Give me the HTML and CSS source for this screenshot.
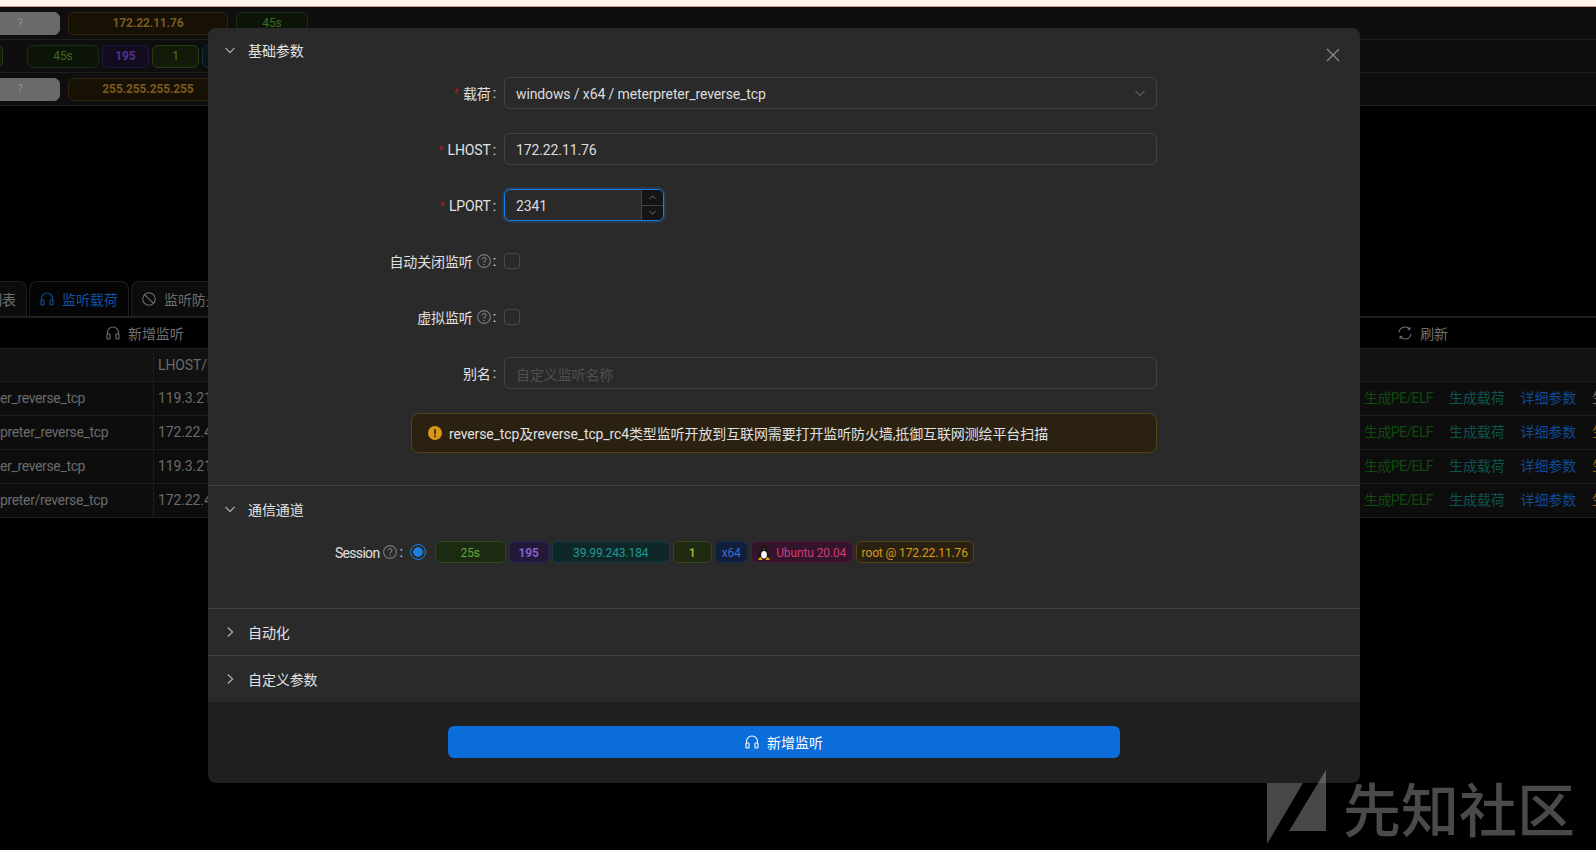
FILE: index.html
```html
<!DOCTYPE html>
<html lang="en">
<head>
    <meta charset="UTF-8">
    <meta name="viewport" content="width=device-width, initial-scale=1.0">
    <title>新增监听</title>
    <link rel="stylesheet" href="styles.css">
</head>
<body>
    <svg class="icon-defs" width="0" height="0">
        <symbol id="i-headset" viewBox="0 0 14 14">
            <path d="M1.500 8V6.500a5.500 5.500 0 0 1 11 0V8" fill="none" stroke="currentColor" stroke-width="1.1"/>
            <rect x="1" y="8" width="3" height="5" rx=".6" fill="none" stroke="currentColor" stroke-width="1.1"/>
            <rect x="10" y="8" width="3" height="5" rx=".6" fill="none" stroke="currentColor" stroke-width="1.1"/>
        </symbol>
        <symbol id="i-help" viewBox="0 0 14 14">
            <circle cx="7" cy="7" r="6.4" fill="none" stroke="currentColor" stroke-width="1.1"/>
            <path d="M5.100 5.500a1.900 1.900 0 1 1 2.900 1.600c-.7.4-1 .8-1 1.600" fill="none" stroke="currentColor" stroke-width="1.1"/>
            <circle cx="7" cy="10.400" r=".75" fill="currentColor"/>
        </symbol>
        <symbol id="i-down" viewBox="0 0 12 12">
            <path d="M1.500 3.800 6 8.600l4.500-4.800" fill="none" stroke="currentColor" stroke-width="1.2"/>
        </symbol>
        <symbol id="i-right" viewBox="0 0 12 12">
            <path d="M3.800 1.500 8.600 6l-4.800 4.500" fill="none" stroke="currentColor" stroke-width="1.2"/>
        </symbol>
    </svg>

    <div class="page">
        <div class="top-strip"></div>

        <div class="session-row">
            <span class="tag tag-grey">?</span>
            <span class="tag tag-gold tag-host">172.22.11.76</span>
            <span class="tag tag-green tag-time">45s</span>
        </div>
        <div class="session-row session-row-shift">
            <span class="tag tag-lime tag-stub"></span>
            <span class="tag tag-green tag-time">45s</span>
            <span class="tag tag-purple tag-pid">195</span>
            <span class="tag tag-lime tag-pid">1</span>
            <span class="tag tag-teal tag-pid"></span>
        </div>
        <div class="session-row">
            <span class="tag tag-grey">?</span>
            <span class="tag tag-gold tag-host">255.255.255.255</span>
        </div>

        <div class="spacer"></div>

        <div class="tabs">
            <div class="tab tab-cut">列表</div>
            <div class="tab tab-active"><svg class="ico"><use href="#i-headset"/></svg>监听载荷</div>
            <div class="tab">
                <svg class="ico" viewBox="0 0 14 14"><circle cx="7" cy="7" r="6.3" fill="none" stroke="currentColor" stroke-width="1.1"/><path d="M2.600 2.600l8.800 8.800" stroke="currentColor" stroke-width="1.1"/></svg>监听防火墙
            </div>
        </div>

        <div class="toolbar">
            <div class="tool"><svg class="ico"><use href="#i-headset"/></svg>新增监听</div>
            <div class="tool">
                <svg class="ico" viewBox="0 0 14 14"><path d="M1 6.200A6 6 0 0 1 11.600 3.200M13 7.800A6 6 0 0 1 2.400 10.800" fill="none" stroke="currentColor" stroke-width="1.1"/><path d="M12 1v2.600H9.600M2 13v-2.600h2.400" fill="none" stroke="currentColor" stroke-width="1"/></svg>刷新
            </div>
        </div>

        <div class="listen-table">
            <div class="listen-head">
                <div class="cell-payload"></div>
                <div class="cell-host">LHOST/RHOST</div>
            </div>
            <div class="listen-row">
                <div class="cell-payload">er_reverse_tcp</div>
                <div class="cell-host">119.3.21.5</div>
                <div class="actions">
                    <span class="act-pe">生成PE/ELF</span><span class="act-teal">生成载荷</span><span class="act-blue">详细参数</span><span class="act-grey">生</span>
                </div>
            </div>
            <div class="listen-row">
                <div class="cell-payload">preter_reverse_tcp</div>
                <div class="cell-host">172.22.4.8</div>
                <div class="actions">
                    <span class="act-pe">生成PE/ELF</span><span class="act-teal">生成载荷</span><span class="act-blue">详细参数</span><span class="act-gold">生</span>
                </div>
            </div>
            <div class="listen-row">
                <div class="cell-payload">er_reverse_tcp</div>
                <div class="cell-host">119.3.21.5</div>
                <div class="actions">
                    <span class="act-pe">生成PE/ELF</span><span class="act-teal">生成载荷</span><span class="act-blue">详细参数</span><span class="act-gold">生</span>
                </div>
            </div>
            <div class="listen-row">
                <div class="cell-payload">preter/reverse_tcp</div>
                <div class="cell-host">172.22.4.8</div>
                <div class="actions">
                    <span class="act-pe">生成PE/ELF</span><span class="act-teal">生成载荷</span><span class="act-blue">详细参数</span><span class="act-gold">生</span>
                </div>
            </div>
        </div>
    </div>

    <div class="modal">
        <svg class="modal-close" viewBox="0 0 14 14"><path d="M1 1l12 12M13 1 1 13" stroke="currentColor" stroke-width="1.3" fill="none"/></svg>

        <section class="panel panel-first">
            <div class="panel-head"><svg class="chev"><use href="#i-down"/></svg>基础参数</div>
            <div class="panel-body">
                <div class="form-item">
                    <label class="form-label"><i class="req">*</i>载荷<b class="colon">:</b></label>
                    <div class="input input-select">windows / x64 / meterpreter_reverse_tcp<svg class="select-arrow"><use href="#i-down"/></svg></div>
                </div>
                <div class="form-item">
                    <label class="form-label label-latin"><i class="req">*</i>LHOST<b class="colon">:</b></label>
                    <div class="input">172.22.11.76</div>
                </div>
                <div class="form-item">
                    <label class="form-label label-latin"><i class="req">*</i>LPORT<b class="colon">:</b></label>
                    <div class="input input-number">2341
                        <div class="steppers">
                            <span class="step"><svg viewBox="0 0 12 12"><path d="M2.500 7.800 6 4.200l3.500 3.600" fill="none" stroke="currentColor"/></svg></span>
                            <span class="step"><svg viewBox="0 0 12 12"><path d="M2.500 4.200 6 7.800l3.500-3.600" fill="none" stroke="currentColor"/></svg></span>
                        </div>
                    </div>
                </div>
                <div class="form-item">
                    <label class="form-label">自动关闭监听<svg class="help"><use href="#i-help"/></svg><b class="colon">:</b></label>
                    <span class="checkbox"></span>
                </div>
                <div class="form-item">
                    <label class="form-label">虚拟监听<svg class="help"><use href="#i-help"/></svg><b class="colon">:</b></label>
                    <span class="checkbox"></span>
                </div>
                <div class="form-item">
                    <label class="form-label">别名<b class="colon">:</b></label>
                    <div class="input input-empty">自定义监听名称</div>
                </div>
                <div class="alert">
                    <svg class="alert-icon" viewBox="0 0 14 14"><circle cx="7" cy="7" r="7" fill="#d89614"/><rect x="6.200" y="3" width="1.600" height="5.400" rx=".6" fill="#2b2111"/><circle cx="7" cy="10.300" r=".95" fill="#2b2111"/></svg>
                    reverse_tcp及reverse_tcp_rc4类型监听开放到互联网需要打开监听防火墙,抵御互联网测绘平台扫描
                </div>
            </div>
        </section>

        <section class="panel">
            <div class="panel-head"><svg class="chev"><use href="#i-down"/></svg>通信通道</div>
            <div class="panel-body panel-body-session">
                <label class="session-label"><span class="session-name">Session</span><svg class="help"><use href="#i-help"/></svg><b class="colon">:</b></label>
                <span class="radio"></span>
                <div class="session-tags">
                    <span class="stag stag-green">25s</span>
                    <span class="stag stag-purple">195</span>
                    <span class="stag stag-cyan">39.99.243.184</span>
                    <span class="stag stag-lime">1</span>
                    <span class="stag stag-blue">x64</span>
                    <span class="stag stag-pink">
                        <svg class="penguin" viewBox="0 0 14 16"><path d="M7 .5c2 0 2.800 1.600 2.800 3.400 0 2 2.400 4 2.400 6.600 0 1.500-1 2.500-2 2.900H4c-1-.4-2.200-1.400-2.200-2.900 0-2.600 2.400-4.600 2.400-6.600C4.200 2.100 5 .5 7 .5z" fill="#151515"/><ellipse cx="7" cy="9.800" rx="2.900" ry="3.800" fill="#f4f4f4"/><path d="M6 3.400h2L7 4.800z" fill="#e6a817"/><path d="M1 14l3-2 1.500 3H2zM13 14l-3-2-1.500 3H12z" fill="#e6a817"/></svg>
                        Ubuntu 20.04
                    </span>
                    <span class="stag stag-gold">root @ 172.22.11.76</span>
                </div>
            </div>
        </section>

        <section class="panel">
            <div class="panel-head"><svg class="chev"><use href="#i-right"/></svg>自动化</div>
        </section>
        <section class="panel">
            <div class="panel-head"><svg class="chev"><use href="#i-right"/></svg>自定义参数</div>
        </section>

        <div class="modal-footer">
            <button class="btn-primary" type="button"><svg class="ico"><use href="#i-headset"/></svg>新增监听</button>
        </div>
    </div>

    <div class="watermark">
        <svg class="watermark-logo" viewBox="0 0 59 74"><path d="M0 13h36L0 74z" /><path d="M59 0v61H22z"/></svg>
        <span class="watermark-text">先知社区</span>
    </div>
</body>
</html>
```

FILE: styles.css
```css
* {
    box-sizing: border-box;
}
html, body {
    margin: 0;
    width: 1596px;
    height: 850px;
    overflow: hidden;
}
body {
    position: relative;
    background-color: #000;
    font-family: Roboto, "Noto Sans CJK SC", sans-serif;
    font-size: 14px;
    letter-spacing: -0.12px;
    color: #ddd;
}
.icon-defs {
    position: absolute;
}
.ico {
    width: 14px;
    height: 14px;
    flex: none;
}

/* page behind the dialog */
.page {
    display: flex;
    flex-direction: column;
    height: 850px;
    overflow: hidden;
}
.top-strip {
    height: 7px;
    background-color: #fff3e8;
    border-bottom: 1px solid #c89a86;
}
.session-row {
    display: flex;
    align-items: center;
    gap: 8px;
    height: 33px;
    background-color: #0e0e0e;
    border-bottom: 1px solid #1f1f1f;
}
.session-row-shift {
    gap: 3px;
}
.tag {
    display: flex;
    align-items: center;
    justify-content: center;
    height: 23px;
    border: 1px solid;
    border-radius: 6px;
    font-size: 12px;
    font-weight: 700;
    flex: none;
}
.tag-grey {
    width: 80px;
    margin-left: -20px;
    background-color: #6a6a6a;
    border-color: #6a6a6a;
    color: #8a8a8a;
    font-weight: 400;
}
.tag-gold {
    background-color: #171005;
    border-color: #33250c;
    color: #7a5a1e;
}
.tag-host {
    width: 160px;
}
.tag-green {
    background-color: #0c1408;
    border-color: #1a2c12;
    color: #3c6a26;
    font-weight: 400;
}
.tag-time {
    width: 72px;
}
.tag-purple {
    background-color: #120c1e;
    border-color: #221640;
    color: #50308f;
}
.tag-lime {
    background-color: #121a08;
    border-color: #2a3c12;
    color: #4f7a1e;
    font-weight: 400;
}
.tag-teal {
    background-color: #08161a;
    border-color: #12303a;
}
.tag-pid {
    width: 47px;
}
.tag-stub {
    width: 30px;
    margin-left: -27px;
    margin-right: 21px;
}
.spacer {
    height: 175px;
}

.tabs {
    display: flex;
    gap: 2px;
    height: 37px;
    border-bottom: 2px solid #1f1f1f;
}
.tab {
    display: flex;
    align-items: center;
    gap: 8px;
    padding: 0 10px;
    background-color: #0c0c0c;
    border: 1px solid #1f1f1f;
    border-bottom: 0;
    border-radius: 8px 8px 0 0;
    color: #6e6e6e;
    white-space: nowrap;
    flex: none;
}
.tab-cut {
    width: 60px;
    margin-left: -33px;
    justify-content: flex-end;
    padding-right: 10px;
}
.tab-active {
    width: 100px;
    background-color: #050505;
    color: #11529c;
}
.toolbar {
    display: flex;
    justify-content: space-between;
    align-items: center;
    height: 31px;
    padding: 0 148px 0 106px;
    border-bottom: 1px solid #222;
}
.tool {
    display: flex;
    align-items: center;
    gap: 8px;
    color: #707070;
}
.listen-table {
    color: #6b6b6b;
}
.listen-head {
    display: flex;
    height: 33px;
    background-color: #111;
    border-bottom: 1px solid #1d1d1d;
    line-height: 33px;
}
.listen-row {
    display: flex;
    height: 34px;
    background-color: #0d0d0d;
    border-bottom: 1px solid #1d1d1d;
    line-height: 32px;
}
.cell-payload {
    width: 154px;
    flex: none;
    white-space: nowrap;
    border-right: 1px solid #1d1d1d;
    overflow: hidden;
    letter-spacing: -0.35px;
}
.cell-host {
    width: 1210px;
    flex: none;
    padding-left: 4px;
}
.actions {
    display: flex;
    gap: 16px;
    white-space: nowrap;
}
.act-pe {
    color: #0f4a0f;
    letter-spacing: -0.6px;
}
.act-teal {
    color: #0c5450;
}
.act-blue {
    color: #0f4a96;
}
.act-grey {
    color: #6b6b6b;
}
.act-gold {
    color: #8a5d14;
}

/* dialog */
.modal {
    position: absolute;
    top: 28px;
    left: 208px;
    width: 1152px;
    height: 755px;
    background-color: #1f1f1f;
    border-radius: 8px;
    overflow: hidden;
}
.modal-close {
    position: absolute;
    top: 20px;
    right: 20px;
    width: 14px;
    height: 14px;
    color: #8a8a8a;
}
.panel {
    background-color: #2a2a2a;
    border-top: 1px solid #424242;
}
.panel-first {
    border-top: 0;
    padding-bottom: 32px;
}
.panel-first .panel-head {
    height: 45px;
    padding-bottom: 1px;
}
.panel-first .panel-body {
    padding-top: 4px;
}
.panel-head {
    display: flex;
    align-items: center;
    height: 46px;
    padding-left: 16px;
    color: #e3e3e3;
}
.chev {
    width: 12px;
    height: 12px;
    margin-right: 12px;
    color: #b0b0b0;
}
.form-item {
    display: flex;
    align-items: center;
    height: 32px;
    margin-bottom: 24px;
}
.form-label {
    display: flex;
    align-items: center;
    justify-content: flex-end;
    width: 296px;
    flex: none;
    color: #e0e0e0;
}
.label-latin {
    padding-top: 2px;
}
.req {
    margin-right: 4px;
    color: #a61d24;
    font-style: normal;
    font-family: "Liberation Sans", sans-serif;
}
.colon {
    margin: 0 8px 0 2px;
    font-weight: 400;
}
.help {
    width: 14px;
    height: 14px;
    margin-left: 4px;
    color: #7a7a7a;
}
.input {
    position: relative;
    display: flex;
    align-items: center;
    width: 653px;
    height: 32px;
    padding: 1px 11px 0;
    border: 1px solid #424242;
    border-radius: 6px;
    color: #ddd;
}
.select-arrow {
    position: absolute;
    top: 9px;
    right: 10px;
    width: 12px;
    height: 12px;
    color: #5e5e5e;
}
.input-number {
    width: 160px;
    border-color: #1b7fe0;
    box-shadow: 0 0 0 2px rgba(23, 125, 220, 0.2);
    overflow: hidden;
}
.steppers {
    position: absolute;
    top: 0;
    right: 0;
    bottom: 0;
    display: flex;
    flex-direction: column;
    width: 22px;
    background-color: #141414;
    border-left: 1px solid #424242;
}
.step {
    display: flex;
    flex: 1;
    align-items: center;
    justify-content: center;
    color: #6e6e6e;
}
.step + .step {
    border-top: 1px solid #424242;
}
.step svg {
    width: 11px;
    height: 11px;
}
.input-empty {
    color: #505050;
}
.checkbox {
    width: 16px;
    height: 16px;
    border: 1px solid #484848;
    border-radius: 3px;
}
.alert {
    display: flex;
    align-items: center;
    width: 746px;
    height: 40px;
    margin-left: 203px;
    padding-left: 16px;
    background-color: #2b2111;
    border: 1px solid #594214;
    border-radius: 8px;
    color: #e0e0e0;
}
.alert-icon {
    width: 14px;
    height: 14px;
    margin-right: 7px;
}
.panel-body-session {
    display: flex;
    align-items: center;
    height: 76px;
    padding: 4px 0 40px 127px;
}
.session-label {
    display: flex;
    align-items: center;
    color: #e0e0e0;
}
.session-name {
    padding-top: 1px;
    letter-spacing: -0.7px;
}
.session-label .colon {
    margin-right: 7px;
}
.radio {
    width: 16px;
    height: 16px;
    margin-right: 9px;
    flex: none;
    border: 1px solid #1b7fe0;
    border-radius: 50%;
    background: radial-gradient(circle, #1b7fe0 0 4.500px, transparent 5px);
}
.session-tags {
    display: flex;
    gap: 3px;
}
.stag {
    display: flex;
    align-items: center;
    justify-content: center;
    gap: 5px;
    height: 22px;
    padding-top: 1px;
    border: 1px solid;
    border-radius: 6px;
    font-size: 12px;
    white-space: nowrap;
}
.stag-green {
    width: 71px;
    background-color: #1b2a10;
    border-color: #2f4a1a;
    color: #62a83a;
}
.stag-purple {
    width: 40px;
    background-color: #221838;
    border-color: #33215a;
    color: #8a5fd0;
    font-weight: 700;
}
.stag-cyan {
    width: 118px;
    background-color: #10272a;
    border-color: #14403f;
    color: #1f9a94;
}
.stag-lime {
    width: 39px;
    background-color: #1f2a10;
    border-color: #37491a;
    color: #8fb02a;
    font-weight: 700;
}
.stag-blue {
    width: 33px;
    background-color: #131f3a;
    border-color: #182b52;
    color: #3a6ccf;
}
.stag-pink {
    width: 102px;
    background-color: #33142a;
    border-color: #4a1c3a;
    color: #d23a7e;
}
.stag-gold {
    width: 118px;
    background-color: #2b2111;
    border-color: #594214;
    color: #d89a1e;
}
.penguin {
    width: 14px;
    height: 16px;
}
.modal-footer {
    display: flex;
    justify-content: center;
    padding-top: 24px;
}
.btn-primary {
    display: flex;
    align-items: center;
    justify-content: center;
    gap: 8px;
    width: 672px;
    height: 32px;
    background-color: #0b6dda;
    border: 0;
    border-radius: 6px;
    color: #fff;
    font-family: inherit;
    font-size: 14px;
}

/* site watermark sits over everything */
.watermark {
    position: absolute;
    top: 770px;
    left: 1267px;
    display: flex;
    align-items: flex-start;
    gap: 17px;
    pointer-events: none;
}
.watermark-logo {
    width: 59px;
    height: 74px;
    fill: rgba(255, 255, 255, 0.28);
}
.watermark-text {
    color: #4a4a4a;
    font-family: "Noto Sans CJK SC", sans-serif;
    font-size: 58px;
    font-weight: 500;
    letter-spacing: 0;
    line-height: 74px;
    white-space: nowrap;
}
```
